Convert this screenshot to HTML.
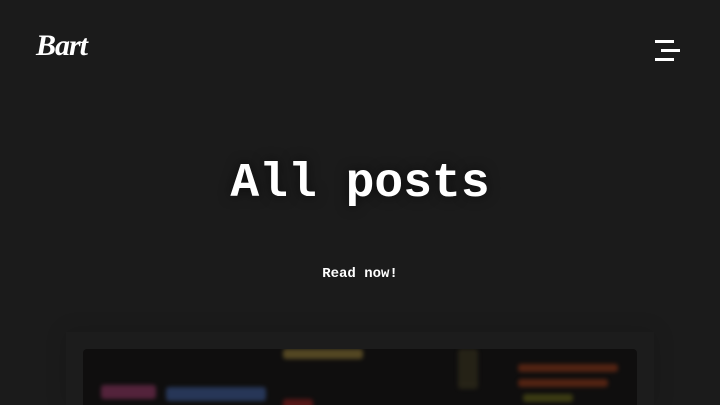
<!DOCTYPE html>
<html><head><style>
html,body{margin:0;width:720px;height:405px;overflow:hidden}
body{background:#1b1b1b;position:relative;font-family:"Liberation Mono",monospace;color:#fff}
.wrap{position:absolute;left:0;top:0;width:720px;height:405px;overflow:hidden}
.logo{position:absolute;left:36px;top:29px;font-family:"Liberation Serif",serif;font-style:italic;font-weight:bold;font-size:30px;letter-spacing:-1px}
.m{position:absolute;height:3px;width:19px;background:#fff}
h1{position:absolute;top:157px;left:0;width:720px;text-align:center;margin:0;font-size:48px;font-weight:bold;text-shadow:0 0 12px rgba(0,0,0,.6)}
.r{position:absolute;top:266px;left:0;width:720px;text-align:center;font-size:14px;font-weight:bold}
.sh{position:absolute;left:66px;top:332px;width:588px;height:73px;background:#1c1c1c;box-shadow:0 0 20px rgba(0,0,0,.15)}
.card{position:absolute;left:83px;top:349px;width:554px;height:56px;background:#0f0e0e;border-radius:4px 4px 0 0;overflow:hidden}
.b{position:absolute;border-radius:3px;filter:blur(2px);opacity:.75}
</style></head><body><div class="wrap">
<div class="logo">Bart</div>
<div class="m" style="left:655px;top:40px"></div>
<div class="m" style="left:661px;top:49px"></div>
<div class="m" style="left:655px;top:58px"></div>
<h1>All posts</h1>
<div class="r">Read now!</div>
<div class="sh"></div>
<div class="card">
<div class="b" style="left:200px;top:0;width:80px;height:10px;background:#6b5a2a"></div>
<div class="b" style="left:18px;top:36px;width:55px;height:14px;background:#6a2a4a"></div>
<div class="b" style="left:83px;top:38px;width:100px;height:14px;background:#2f4470"></div>
<div class="b" style="left:200px;top:50px;width:30px;height:14px;background:#6a1a1a"></div>
<div class="b" style="left:375px;top:0;width:20px;height:40px;background:#2e2a1a"></div>
<div class="b" style="left:435px;top:15px;width:100px;height:8px;background:#6a2a14"></div>
<div class="b" style="left:435px;top:30px;width:90px;height:8px;background:#6a2a14"></div>
<div class="b" style="left:440px;top:45px;width:50px;height:8px;background:#4a4a14"></div>
</div>
</div></body></html>
